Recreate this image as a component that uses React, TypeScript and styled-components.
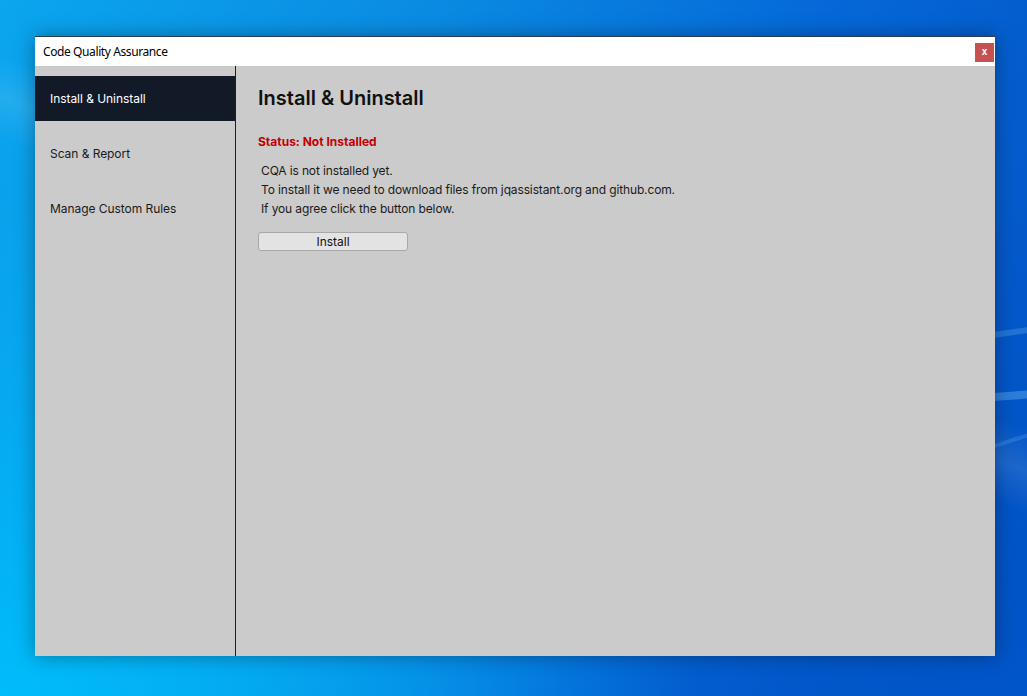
import React from "react";
import styled, { createGlobalStyle } from "styled-components";

const Global = createGlobalStyle`
  html, body { margin: 0; padding: 0; }
  body { width: 1027px; height: 696px; overflow: hidden; font-family: Inter, "Noto Sans", sans-serif; }
`;

const Desktop = styled.div`
  position: relative;
  width: 1027px;
  height: 696px;
  overflow: hidden;
  box-sizing: border-box;
  padding: 36px 0 0 35px;
  background:
    linear-gradient(200deg, rgba(255,255,255,0) 40%, rgba(255,255,255,0.10) 44%, rgba(255,255,255,0) 48%),
    radial-gradient(ellipse 700px 500px at 0% 100%, #00bcfa 0%, rgba(0,180,245,0) 100%),
    radial-gradient(ellipse 600px 500px at 100% 100%, #0055c8 0%, rgba(0,85,200,0) 100%),
    linear-gradient(110deg, #0aa6ee 0%, #0a8ae2 35%, #0568d8 65%, #0450c0 100%);
`;

const Ray = styled.div<{ $top: number; $rot: number; $h: number; $op: number }>`
  position: absolute;
  right: -40px;
  width: 120px;
  top: ${(p) => p.$top}px;
  height: ${(p) => p.$h}px;
  background: rgba(120, 200, 255, ${(p) => p.$op});
  transform: rotate(${(p) => p.$rot}deg);
`;

const Window = styled.div`
  position: relative;
  width: 960px;
  height: 620px;
  display: flex;
  flex-direction: column;
  background: #cbcbcb;
  box-shadow: 0 0 18px rgba(0, 0, 0, 0.35);
  border-top: 1px solid #2a3b52;
  box-sizing: border-box;
`;

const TitleBar = styled.div`
  height: 29px;
  flex: none;
  background: #ffffff;
  display: flex;
  align-items: flex-start;
  justify-content: space-between;
  padding-left: 8px;
  padding-right: 1px;
`;

const Title = styled.span`
  font-family: "Segoe UI", "Noto Sans", sans-serif;
  font-size: 12px;
  line-height: 29px;
  color: #000;
  letter-spacing: -0.4px;
`;

const CloseButton = styled.div`
  margin-top: 6px;
  width: 19px;
  height: 19px;
  background: #c75050;
  color: #fff;
  font-family: "DejaVu Sans Mono", monospace;
  font-weight: bold;
  font-size: 10px;
  line-height: 18px;
  text-align: center;
`;

const Body = styled.div`
  flex: 1;
  display: flex;
`;

const Sidebar = styled.nav`
  width: 200px;
  flex: none;
  border-right: 1px solid #1e1e1e;
  padding-top: 10px;
  display: flex;
  flex-direction: column;
  gap: 10px;
`;

const NavItem = styled.div<{ $active?: boolean }>`
  height: 45px;
  display: flex;
  align-items: center;
  padding-left: 15px;
  font-size: 12px;
  letter-spacing: -0.05px;
  color: ${(p) => (p.$active ? "#ffffff" : "#1a1a1a")};
  background: ${(p) => (p.$active ? "#111a26" : "transparent")};
`;

const Content = styled.main`
  flex: 1;
  padding: 19px 22px;
  display: flex;
  flex-direction: column;
  align-items: flex-start;
`;

const Heading = styled.h1`
  margin: 0;
  font-size: 20px;
  font-weight: 600;
  color: #111;
  line-height: 26px;
`;

const Status = styled.div`
  margin-top: 23px;
  font-size: 12px;
  font-weight: 700;
  color: #c20000;
  line-height: 16px;
`;

const Paragraph = styled.div`
  margin-top: 11px;
  padding-left: 3px;
  font-size: 12px;
  letter-spacing: -0.13px;
  color: #1a1a1a;
  line-height: 19px;
`;

const Button = styled.button`
  margin-top: 14px;
  width: 150px;
  height: 19px;
  padding: 0;
  background: #e3e3e3;
  border: 1px solid #a8a8a8;
  border-radius: 3px;
  font-family: Inter, "Noto Sans", sans-serif;
  font-size: 12px;
  color: #111;
  line-height: 16px;
`;

export default function App() {
  return (
    <>
      <Global />
      <Desktop>
        <Ray $top={330} $rot={-8} $h={6} $op={0.25} />
        <Ray $top={392} $rot={-4} $h={8} $op={0.35} />
        <Ray $top={440} $rot={-18} $h={4} $op={0.2} />
        <Window>
          <TitleBar>
            <Title>Code Quality Assurance</Title>
            <CloseButton>x</CloseButton>
          </TitleBar>
          <Body>
            <Sidebar>
              <NavItem $active>Install &amp; Uninstall</NavItem>
              <NavItem>Scan &amp; Report</NavItem>
              <NavItem>Manage Custom Rules</NavItem>
            </Sidebar>
            <Content>
              <Heading>Install &amp; Uninstall</Heading>
              <Status>Status: Not Installed</Status>
              <Paragraph>
                CQA is not installed yet.
                <br />
                To install it we need to download files from jqassistant.org and github.com.
                <br />
                If you agree click the button below.
              </Paragraph>
              <Button>Install</Button>
            </Content>
          </Body>
        </Window>
      </Desktop>
    </>
  );
}
